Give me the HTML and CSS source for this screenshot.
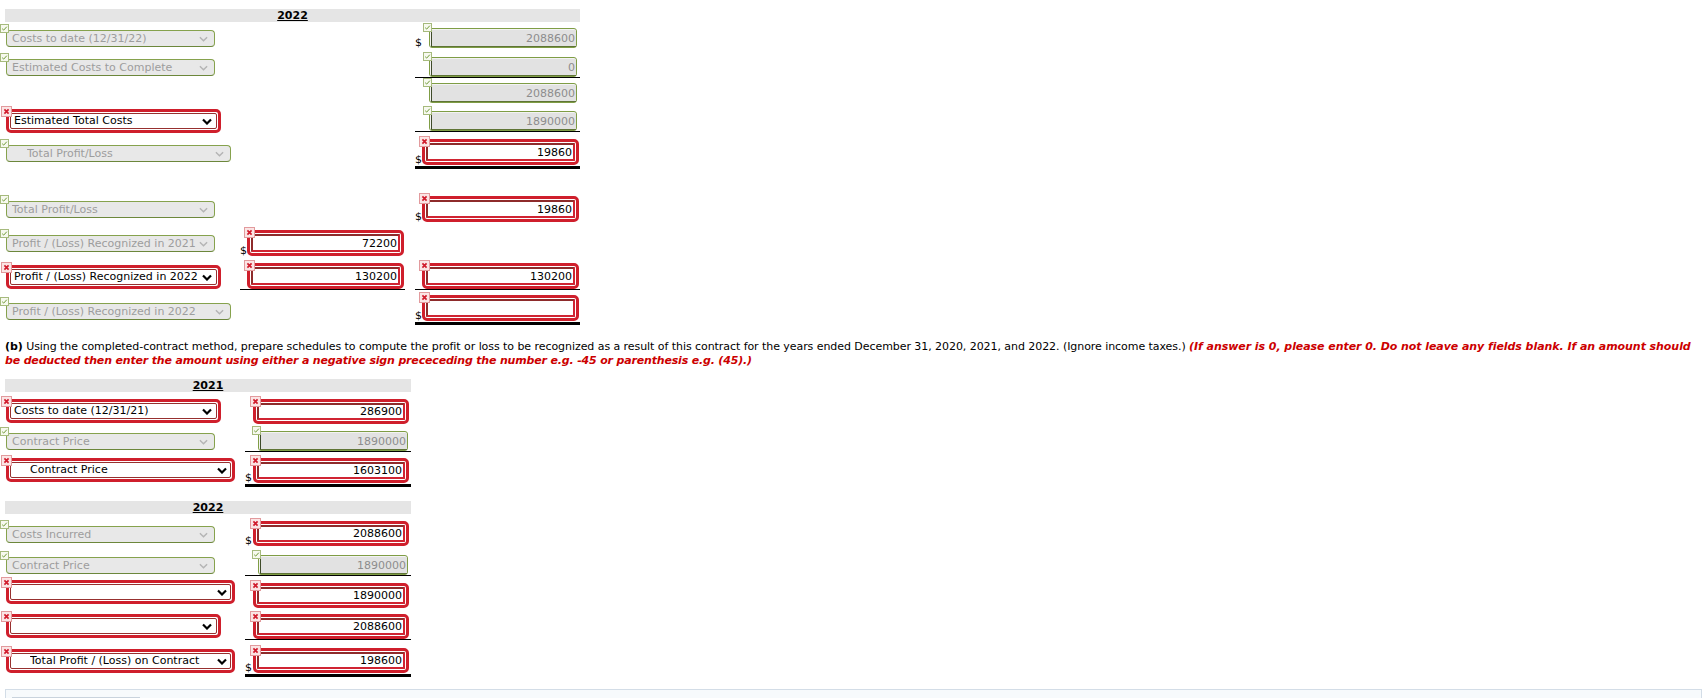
FILE: index.html
```html
<!DOCTYPE html>
<html>
<head>
<meta charset="utf-8">
<title>Contract schedules</title>
<link rel="stylesheet" href="styles.css">
</head>
<body>
<div class="page">

  <div class="sheet s1">
    <div class="hdr">2022</div>

    <!-- row A -->
    <div class="cell c1">
      <div class="fld gsel b3">
        <svg class="ico ok" viewBox="0 0 9 9"><rect x=".5" y=".5" width="8" height="8"/><path d="M2.2 4.7l1.5 1.4 3.1-3.4"/></svg>
        <select class="in" disabled><option>Costs to date (12/31/22)</option></select>
        <svg class="chev" viewBox="0 0 10 6"><path d="M1 1l4 4 4-4"/></svg>
      </div>
    </div>
    <div class="cell c2"></div>
    <div class="cell c3">
      <span class="dol b2">$</span>
      <div class="fld gin b2">
        <svg class="ico ok" viewBox="0 0 9 9"><rect x=".5" y=".5" width="8" height="8"/><path d="M2.2 4.7l1.5 1.4 3.1-3.4"/></svg>
        <div class="gwrap"><input class="in" type="text" value="2088600" disabled></div>
      </div>
    </div>

    <!-- row B -->
    <div class="cell c1">
      <div class="fld gsel b2">
        <svg class="ico ok" viewBox="0 0 9 9"><rect x=".5" y=".5" width="8" height="8"/><path d="M2.2 4.7l1.5 1.4 3.1-3.4"/></svg>
        <select class="in" disabled><option>Estimated Costs to Complete</option></select>
        <svg class="chev" viewBox="0 0 10 6"><path d="M1 1l4 4 4-4"/></svg>
      </div>
    </div>
    <div class="cell c2"></div>
    <div class="cell c3 u1">
      <span class="dol"></span>
      <div class="fld gin b0">
        <svg class="ico ok" viewBox="0 0 9 9"><rect x=".5" y=".5" width="8" height="8"/><path d="M2.2 4.7l1.5 1.4 3.1-3.4"/></svg>
        <div class="gwrap"><input class="in" type="text" value="0" disabled></div>
      </div>
    </div>

    <!-- row C -->
    <div class="cell c1"></div>
    <div class="cell c2"></div>
    <div class="cell c3">
      <span class="dol"></span>
      <div class="fld gin b1">
        <svg class="ico ok" viewBox="0 0 9 9"><rect x=".5" y=".5" width="8" height="8"/><path d="M2.2 4.7l1.5 1.4 3.1-3.4"/></svg>
        <div class="gwrap"><input class="in" type="text" value="2088600" disabled></div>
      </div>
    </div>

    <!-- row D -->
    <div class="cell c1">
      <div class="fld rsel b0">
        <svg class="ico bad" viewBox="0 0 11 11"><rect x=".5" y=".5" width="10" height="10"/><path d="M3.4 3.4l4.2 4.2m0-4.2l-4.2 4.2"/></svg>
        <div class="ring"><select class="in"><option>Estimated Total Costs</option></select></div>
        <svg class="chev" viewBox="0 0 10 6"><path d="M1 1l4 4 4-4"/></svg>
      </div>
    </div>
    <div class="cell c2"></div>
    <div class="cell c3 u1 cm1">
      <span class="dol"></span>
      <div class="fld gin b0">
        <svg class="ico ok" viewBox="0 0 9 9"><rect x=".5" y=".5" width="8" height="8"/><path d="M2.2 4.7l1.5 1.4 3.1-3.4"/></svg>
        <div class="gwrap"><input class="in" type="text" value="1890000" disabled></div>
      </div>
    </div>

    <!-- row E -->
    <div class="cell c1">
      <div class="fld gsel w ind b8">
        <svg class="ico ok" viewBox="0 0 9 9"><rect x=".5" y=".5" width="8" height="8"/><path d="M2.2 4.7l1.5 1.4 3.1-3.4"/></svg>
        <select class="in" disabled><option>Total Profit/Loss</option></select>
        <svg class="chev" viewBox="0 0 10 6"><path d="M1 1l4 4 4-4"/></svg>
      </div>
    </div>
    <div class="cell c2"></div>
    <div class="cell c3 u2 cm1">
      <span class="dol b1">$</span>
      <div class="fld rin b1">
        <svg class="ico bad" viewBox="0 0 11 11"><rect x=".5" y=".5" width="10" height="10"/><path d="M3.4 3.4l4.2 4.2m0-4.2l-4.2 4.2"/></svg>
        <div class="ring"><input class="in" type="text" value="19860"></div>
      </div>
    </div>

    <!-- row F -->
    <div class="cell c1">
      <div class="fld gsel b6">
        <svg class="ico ok" viewBox="0 0 9 9"><rect x=".5" y=".5" width="8" height="8"/><path d="M2.2 4.7l1.5 1.4 3.1-3.4"/></svg>
        <select class="in" disabled><option>Total Profit/Loss</option></select>
        <svg class="chev" viewBox="0 0 10 6"><path d="M1 1l4 4 4-4"/></svg>
      </div>
    </div>
    <div class="cell c2"></div>
    <div class="cell c3">
      <span class="dol b2">$</span>
      <div class="fld rin b2">
        <svg class="ico bad" viewBox="0 0 11 11"><rect x=".5" y=".5" width="10" height="10"/><path d="M3.4 3.4l4.2 4.2m0-4.2l-4.2 4.2"/></svg>
        <div class="ring"><input class="in" type="text" value="19860"></div>
      </div>
    </div>

    <!-- row G -->
    <div class="cell c1">
      <div class="fld gsel b6">
        <svg class="ico ok" viewBox="0 0 9 9"><rect x=".5" y=".5" width="8" height="8"/><path d="M2.2 4.7l1.5 1.4 3.1-3.4"/></svg>
        <select class="in" disabled><option>Profit / (Loss) Recognized in 2021</option></select>
        <svg class="chev" viewBox="0 0 10 6"><path d="M1 1l4 4 4-4"/></svg>
      </div>
    </div>
    <div class="cell c2">
      <span class="dol b2">$</span>
      <div class="fld rin b2">
        <svg class="ico bad" viewBox="0 0 11 11"><rect x=".5" y=".5" width="10" height="10"/><path d="M3.4 3.4l4.2 4.2m0-4.2l-4.2 4.2"/></svg>
        <div class="ring"><input class="in" type="text" value="72200"></div>
      </div>
    </div>
    <div class="cell c3"></div>

    <!-- row H -->
    <div class="cell c1">
      <div class="fld rsel b2">
        <svg class="ico bad" viewBox="0 0 11 11"><rect x=".5" y=".5" width="10" height="10"/><path d="M3.4 3.4l4.2 4.2m0-4.2l-4.2 4.2"/></svg>
        <div class="ring"><select class="in"><option>Profit / (Loss) Recognized in 2022</option></select></div>
        <svg class="chev" viewBox="0 0 10 6"><path d="M1 1l4 4 4-4"/></svg>
      </div>
    </div>
    <div class="cell c2 u1 cm1">
      <span class="dol"></span>
      <div class="fld rin b0">
        <svg class="ico bad" viewBox="0 0 11 11"><rect x=".5" y=".5" width="10" height="10"/><path d="M3.4 3.4l4.2 4.2m0-4.2l-4.2 4.2"/></svg>
        <div class="ring"><input class="in" type="text" value="130200"></div>
      </div>
    </div>
    <div class="cell c3 u1 cm1">
      <span class="dol"></span>
      <div class="fld rin b0">
        <svg class="ico bad" viewBox="0 0 11 11"><rect x=".5" y=".5" width="10" height="10"/><path d="M3.4 3.4l4.2 4.2m0-4.2l-4.2 4.2"/></svg>
        <div class="ring"><input class="in" type="text" value="130200"></div>
      </div>
    </div>

    <!-- row I -->
    <div class="cell c1">
      <div class="fld gsel w b5">
        <svg class="ico ok" viewBox="0 0 9 9"><rect x=".5" y=".5" width="8" height="8"/><path d="M2.2 4.7l1.5 1.4 3.1-3.4"/></svg>
        <select class="in" disabled><option>Profit / (Loss) Recognized in 2022</option></select>
        <svg class="chev" viewBox="0 0 10 6"><path d="M1 1l4 4 4-4"/></svg>
      </div>
    </div>
    <div class="cell c2"></div>
    <div class="cell c3 u2">
      <span class="dol b1">$</span>
      <div class="fld rin b1">
        <svg class="ico bad" viewBox="0 0 11 11"><rect x=".5" y=".5" width="10" height="10"/><path d="M3.4 3.4l4.2 4.2m0-4.2l-4.2 4.2"/></svg>
        <div class="ring"><input class="in" type="text" value=""></div>
      </div>
    </div>
  </div>

  <p class="q"><span class="ln"><b>(b)</b> Using the completed-contract method, prepare schedules to compute the profit or loss to be recognized as a result of this contract for the years ended December 31, 2020, 2021, and 2022. (Ignore income taxes.) <em class="warn">(If answer is 0, please enter 0. Do not leave any fields blank. If an amount should</em></span><br><em class="warn l2">be deducted then enter the amount using either a negative sign prececeding the number e.g. -45 or parenthesis e.g. (45).)</em></p>

  <div class="sheet s2">
    <div class="hdr">2021</div>

    <div class="cell c1">
      <div class="fld rsel b1">
        <svg class="ico bad" viewBox="0 0 11 11"><rect x=".5" y=".5" width="10" height="10"/><path d="M3.4 3.4l4.2 4.2m0-4.2l-4.2 4.2"/></svg>
        <div class="ring"><select class="in"><option>Costs to date (12/31/21)</option></select></div>
        <svg class="chev" viewBox="0 0 10 6"><path d="M1 1l4 4 4-4"/></svg>
      </div>
    </div>
    <div class="cell c2">
      <span class="dol"></span>
      <div class="fld rin b0">
        <svg class="ico bad" viewBox="0 0 11 11"><rect x=".5" y=".5" width="10" height="10"/><path d="M3.4 3.4l4.2 4.2m0-4.2l-4.2 4.2"/></svg>
        <div class="ring"><input class="in" type="text" value="286900"></div>
      </div>
    </div>

    <div class="cell c1">
      <div class="fld gsel b2">
        <svg class="ico ok" viewBox="0 0 9 9"><rect x=".5" y=".5" width="8" height="8"/><path d="M2.2 4.7l1.5 1.4 3.1-3.4"/></svg>
        <select class="in" disabled><option>Contract Price</option></select>
        <svg class="chev" viewBox="0 0 10 6"><path d="M1 1l4 4 4-4"/></svg>
      </div>
    </div>
    <div class="cell c2 u1">
      <span class="dol"></span>
      <div class="fld gin b0">
        <svg class="ico ok" viewBox="0 0 9 9"><rect x=".5" y=".5" width="8" height="8"/><path d="M2.2 4.7l1.5 1.4 3.1-3.4"/></svg>
        <div class="gwrap"><input class="in" type="text" value="1890000" disabled></div>
      </div>
    </div>

    <div class="cell c1">
      <div class="fld rsel w ind b6">
        <svg class="ico bad" viewBox="0 0 11 11"><rect x=".5" y=".5" width="10" height="10"/><path d="M3.4 3.4l4.2 4.2m0-4.2l-4.2 4.2"/></svg>
        <div class="ring"><select class="in"><option>Contract Price</option></select></div>
        <svg class="chev" viewBox="0 0 10 6"><path d="M1 1l4 4 4-4"/></svg>
      </div>
    </div>
    <div class="cell c2 u2 cm1">
      <span class="dol b1">$</span>
      <div class="fld rin b1">
        <svg class="ico bad" viewBox="0 0 11 11"><rect x=".5" y=".5" width="10" height="10"/><path d="M3.4 3.4l4.2 4.2m0-4.2l-4.2 4.2"/></svg>
        <div class="ring"><input class="in" type="text" value="1603100"></div>
      </div>
    </div>
  </div>

  <div class="sheet s3">
    <div class="hdr">2022</div>

    <div class="cell c1">
      <div class="fld gsel b3">
        <svg class="ico ok" viewBox="0 0 9 9"><rect x=".5" y=".5" width="8" height="8"/><path d="M2.2 4.7l1.5 1.4 3.1-3.4"/></svg>
        <select class="in" disabled><option>Costs Incurred</option></select>
        <svg class="chev" viewBox="0 0 10 6"><path d="M1 1l4 4 4-4"/></svg>
      </div>
    </div>
    <div class="cell c2">
      <span class="dol">$</span>
      <div class="fld rin b0">
        <svg class="ico bad" viewBox="0 0 11 11"><rect x=".5" y=".5" width="10" height="10"/><path d="M3.4 3.4l4.2 4.2m0-4.2l-4.2 4.2"/></svg>
        <div class="ring"><input class="in" type="text" value="2088600"></div>
      </div>
    </div>

    <div class="cell c1">
      <div class="fld gsel b2">
        <svg class="ico ok" viewBox="0 0 9 9"><rect x=".5" y=".5" width="8" height="8"/><path d="M2.2 4.7l1.5 1.4 3.1-3.4"/></svg>
        <select class="in" disabled><option>Contract Price</option></select>
        <svg class="chev" viewBox="0 0 10 6"><path d="M1 1l4 4 4-4"/></svg>
      </div>
    </div>
    <div class="cell c2 u1">
      <span class="dol"></span>
      <div class="fld gin b0">
        <svg class="ico ok" viewBox="0 0 9 9"><rect x=".5" y=".5" width="8" height="8"/><path d="M2.2 4.7l1.5 1.4 3.1-3.4"/></svg>
        <div class="gwrap"><input class="in" type="text" value="1890000" disabled></div>
      </div>
    </div>

    <div class="cell c1">
      <div class="fld rsel w b4">
        <svg class="ico bad" viewBox="0 0 11 11"><rect x=".5" y=".5" width="10" height="10"/><path d="M3.4 3.4l4.2 4.2m0-4.2l-4.2 4.2"/></svg>
        <div class="ring"><select class="in"><option></option></select></div>
        <svg class="chev" viewBox="0 0 10 6"><path d="M1 1l4 4 4-4"/></svg>
      </div>
    </div>
    <div class="cell c2">
      <span class="dol"></span>
      <div class="fld rin b0">
        <svg class="ico bad" viewBox="0 0 11 11"><rect x=".5" y=".5" width="10" height="10"/><path d="M3.4 3.4l4.2 4.2m0-4.2l-4.2 4.2"/></svg>
        <div class="ring"><input class="in" type="text" value="1890000"></div>
      </div>
    </div>

    <div class="cell c1">
      <div class="fld rsel b2">
        <svg class="ico bad" viewBox="0 0 11 11"><rect x=".5" y=".5" width="10" height="10"/><path d="M3.4 3.4l4.2 4.2m0-4.2l-4.2 4.2"/></svg>
        <div class="ring"><select class="in"><option></option></select></div>
        <svg class="chev" viewBox="0 0 10 6"><path d="M1 1l4 4 4-4"/></svg>
      </div>
    </div>
    <div class="cell c2 u1">
      <span class="dol"></span>
      <div class="fld rin b0">
        <svg class="ico bad" viewBox="0 0 11 11"><rect x=".5" y=".5" width="10" height="10"/><path d="M3.4 3.4l4.2 4.2m0-4.2l-4.2 4.2"/></svg>
        <div class="ring"><input class="in" type="text" value="2088600"></div>
      </div>
    </div>

    <div class="cell c1">
      <div class="fld rsel w ind b5">
        <svg class="ico bad" viewBox="0 0 11 11"><rect x=".5" y=".5" width="10" height="10"/><path d="M3.4 3.4l4.2 4.2m0-4.2l-4.2 4.2"/></svg>
        <div class="ring"><select class="in"><option>Total Profit / (Loss) on Contract</option></select></div>
        <svg class="chev" viewBox="0 0 10 6"><path d="M1 1l4 4 4-4"/></svg>
      </div>
    </div>
    <div class="cell c2 u2 cm1">
      <span class="dol b1">$</span>
      <div class="fld rin b1">
        <svg class="ico bad" viewBox="0 0 11 11"><rect x=".5" y=".5" width="10" height="10"/><path d="M3.4 3.4l4.2 4.2m0-4.2l-4.2 4.2"/></svg>
        <div class="ring"><input class="in" type="text" value="198600"></div>
      </div>
    </div>
  </div>

  <div class="foot"><div class="foot-btn"></div></div>
</div>
</body>
</html>
```

FILE: styles.css
```css
* { box-sizing: border-box; }
html, body { margin: 0; padding: 0; overflow: hidden; background: #fff; }
body { font-family: "DejaVu Sans", Verdana, sans-serif; font-size: 11px; color: #000; }

.page { padding: 9px 0 0 5px; }

.sheet { display: grid; }
.s1 { width: 575px; grid-template-columns: 235px 170px 170px; grid-template-rows: 13px 28px 28px 26px 29px 37px 54px 34px 33px 34px; }
.s2 { width: 406px; margin-top: 11px; grid-template-columns: 240px 166px; grid-template-rows: 13px 32px 28px 36px; }
.s3 { width: 406px; margin-top: 13px; grid-template-columns: 240px 166px; grid-template-rows: 13px 32px 30px 32px 32px 38px; }

.hdr { grid-column: 1 / -1; background: #e5e5e5; text-align: center; font-weight: bold; text-decoration: underline; line-height: 13px; }

.cell { display: flex; align-items: flex-end; min-width: 0; }
.s1 .c2 { margin-right: 5px; }
.s1 .c3 { margin-left: 5px; }
.u1 { border-bottom: 1px solid #000; }
.u2 { border-bottom: 3px solid #000; }
.cm1 { margin-bottom: 1px; }

.dol { width: 7px; flex: none; line-height: 11px; }
.s2 .dol, .s3 .dol { width: 8px; }

.b0 { margin-bottom: 0; }
.b1 { margin-bottom: 1px; }
.b2 { margin-bottom: 2px; }
.b3 { margin-bottom: 3px; }
.b4 { margin-bottom: 4px; }
.b5 { margin-bottom: 5px; }
.b6 { margin-bottom: 6px; }
.b8 { margin-bottom: 8px; }

/* fields */
.fld { position: relative; flex: none; }
.in { font: inherit; margin: 0; display: block; width: 100%; -webkit-appearance: none; appearance: none; outline: none; opacity: 1; }

.ico { position: absolute; z-index: 2; display: block; }
.ico.ok { width: 9px; height: 9px; }
.ico.ok rect { fill: #f7f9ef; stroke: #a6ba7d; stroke-width: 1; }
.ico.ok path { fill: none; stroke: #6f9a36; stroke-width: 1; }
.ico.bad { width: 11px; height: 11px; }
.ico.bad rect { fill: #fbe5e5; stroke: #e29a9d; stroke-width: 1; }
.ico.bad path { fill: none; stroke: #d01b2c; stroke-width: 1.7; }

.gsel .ico { left: -6px; top: -6px; }
.gin .ico { left: -6px; top: -5px; }
.rsel .ico { left: -5px; top: -3px; }
.rin .ico { left: -3px; top: -3px; }

.chev { position: absolute; top: 50%; fill: none; z-index: 1; pointer-events: none; }
.gsel .chev { width: 9px; height: 6px; right: 7px; margin-top: -3px; stroke: #b4b4b4; stroke-width: 1.6; }
.rsel .chev { width: 10px; height: 7px; right: 9px; margin-top: -3px; stroke: #000; stroke-width: 2.2; }
.rsel.w .chev { right: 8px; }

/* green (correct) select */
.gsel { width: 209px; height: 17px; margin-left: 1px; }
.gsel.w { width: 225px; }
.gsel .in { height: 17px; border: 1px solid #86a24d; border-bottom-color: #6c873b; border-radius: 4px; background: #e8e8e8; color: #9d9d9d; padding: 0 0 0 5px; line-height: 15px; }
.gsel.ind .in { padding-left: 20px; }

/* red (wrong) ring */
.ring { border: 3px solid #cf1f2c; border-radius: 5px; padding: 1px; background: #fff; }

.rsel { width: 215px; height: 24px; margin-left: 1px; }
.rsel.w { width: 229px; }
.rsel .in { height: 16px; border: 1px solid #97302f; border-radius: 2px; background: #fff; color: #000; padding: 0 0 0 3px; line-height: 14px; }
.rsel.ind .in { padding-left: 19px; }

.rin { width: 157px; height: 26px; }
.rin .in { height: 18px; border: 2px solid #d02432; border-top-color: #8e2b2b; border-left-color: #8e2b2b; border-radius: 1px; background: #fff; color: #000; text-align: right; padding: 0 1px 0 0; }
.s2 .rin, .s3 .rin { width: 156px; height: 25px; }
.s2 .rin .in, .s3 .rin .in { height: 17px; }

/* green (correct) input */
.gin { width: 148px; height: 20px; margin-left: 7px; }
.s2 .gin, .s3 .gin { width: 150px; margin-left: 5px; }
.gwrap { height: 20px; border: 1px solid #7f9d45; border-radius: 3px; padding: 1px 0 0 1px; background: #f3f3f3; }
.gin .in { height: 17px; border: 0; border-left: 1px solid #3f4b2a; border-bottom: 1px solid #5f7436; background: #e2e2e2; color: #8d8d8d; -webkit-text-fill-color: #8d8d8d; text-align: right; padding: 0 1px 0 0; }

/* question text */
.q { margin: 15px 0 0; line-height: 14px; letter-spacing: -0.06px; }
.ln { white-space: nowrap; }
.warn { color: #cc0000; font-weight: bold; font-style: italic; }
.warn.l2 { letter-spacing: -0.17px; }

/* bottom panel */
.foot { margin: 11px 5px 0 0; height: 40px; border: 1px solid #d3dde7; background: #f7fafc; padding: 7px 0 0 6px; }
.foot-btn { width: 128px; height: 24px; border: 1px solid #c9d3dd; background: #fff; }
```
